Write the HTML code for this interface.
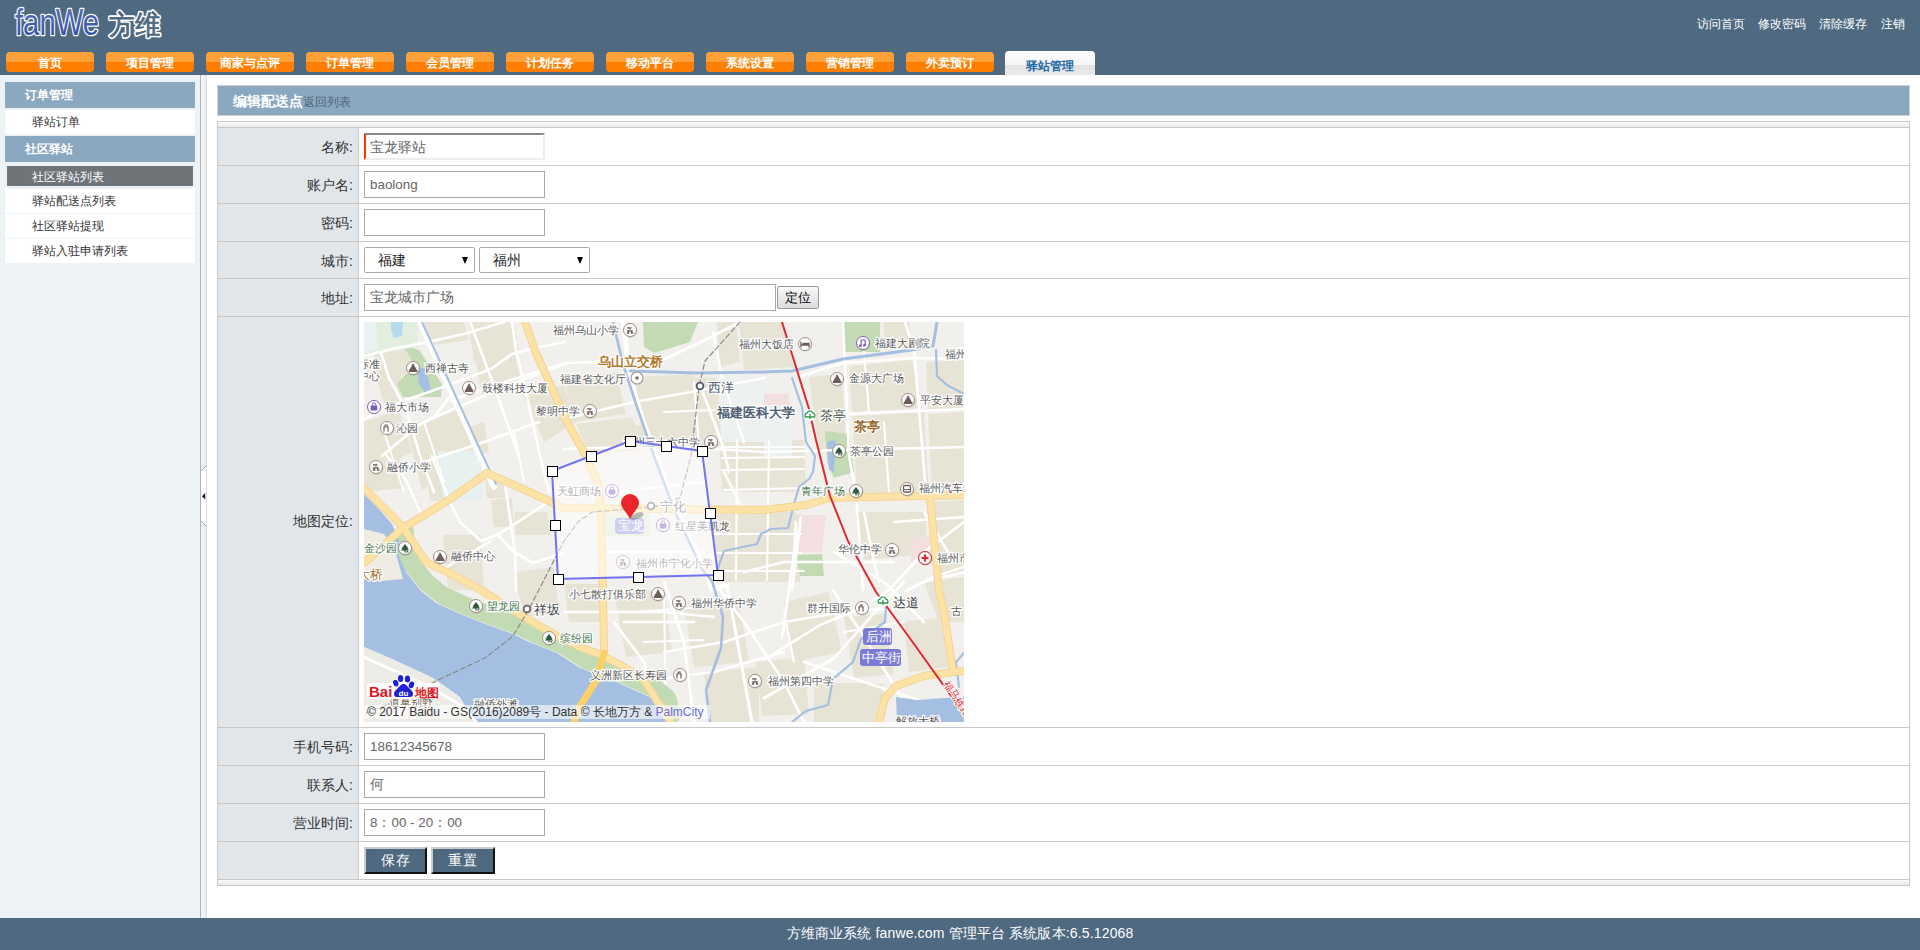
<!DOCTYPE html><html><head><meta charset="utf-8"><style>*{box-sizing:border-box;margin:0;padding:0}
html,body{width:1920px;height:950px;overflow:hidden;background:#fff;font-family:"Liberation Sans",sans-serif;font-size:12px;color:#333}
#hdr{position:absolute;left:0;top:0;width:1920px;height:75px;background:#4e6980}
#logo{position:absolute;left:14px;top:4px;height:36px;color:#4d64a8;font-size:30px;white-space:nowrap}
.lg1{font-family:"Liberation Sans",sans-serif;-webkit-text-stroke:1.5px #fff;font-size:30px;letter-spacing:-1px}
.lg2{margin-left:10px;-webkit-text-stroke:1px #fff;font-size:28px}
.tab{position:absolute;top:52px;width:88px;height:20px;border-radius:4px;background:linear-gradient(#ffa13a 0,#ffa13a 50%,#ff7e00 50%,#ff7e00 100%);color:#fff;font-weight:bold;font-size:12px;text-align:center;line-height:22px}
.tab.on{top:51px;height:24px;width:90px;border-radius:4px 4px 0 0;background:linear-gradient(#ffffff,#f4f4f4 58%,#e2e2e2 58%,#ebebeb);color:#1f6aa6;font-weight:600;line-height:31px;font-size:12px}
.toplink{position:absolute;top:16px;color:#fff;font-size:12px}
#side{position:absolute;left:0;top:75px;width:200px;height:843px;background:#edf2f6}
.grp{position:absolute;left:5px;width:190px;height:26px;background:#8ba8c1;color:#fff;font-weight:bold;padding-left:20px;line-height:26px}
.item{position:absolute;left:5px;width:190px;height:24px;background:#fff;padding-left:27px;line-height:25px;color:#333}
.item.on{background:#6e7478;color:#fff;left:7px;width:186px;height:20px;margin-top:2px;line-height:23px;padding-left:25px}
#split{position:absolute;left:200px;top:75px;width:7px;height:843px;background:linear-gradient(90deg,#b0b2b4 0,#b0b2b4 1px,#f8f9fa 1px,#e8ebef 6px,#dadde2 6px)}
#main{position:absolute;left:207px;top:75px;width:1713px;height:843px;background:#fff}
#title{position:absolute;left:217px;top:85px;width:1693px;height:31px;background:#8ba8c1;border:1px solid #cfcfcf;color:#fff;font-weight:bold;font-size:14px;line-height:30px;padding-left:15px}
#title span{font-weight:normal;color:#52677a;font-size:12px}
#ftr{position:absolute;left:0;top:918px;width:1920px;height:32px;background:#4e6980;color:#fff;font-size:14px;text-align:center;line-height:30px;letter-spacing:0.15px}
#tbl{position:absolute;left:217px;top:121px;width:1693px;height:765px;border:1px solid #c8c8c8;background:linear-gradient(#fbfbfb,#e9e9e9 5px,#c8c8c8 5px,#c8c8c8 6px,#fff 6px,#fff 757px,#fbfbfb 758px,#e9e9e9 763px)}
.row{position:absolute;left:218px;width:1691px;border-bottom:1px solid #c8c8c8;background:#fff}
.lab{position:absolute;left:0;top:0;width:141px;height:100%;background:#e1e6eb;border-right:1px solid #c8c8c8;text-align:right;font-size:14px;color:#333;padding-right:5px}
.inp{position:absolute;left:364px;width:181px;height:27px;border:1px solid #a9a9a9;background:#fff;font-size:14px;color:#666;padding-left:5px;line-height:25px;white-space:nowrap}
.inp.focus{padding-left:4px;border-left:2px solid #f30;border-top:2px solid #888;border-bottom:2px solid #eee;border-right:2px solid #eee}
.sel{position:absolute;width:111px;height:26px;border:1px solid #a9a9a9;border-radius:2px;background:#fff;font-size:14px;color:#222;padding-left:13px;line-height:25px}
.sel i{position:absolute;right:6px;top:9px;border-left:3.5px solid transparent;border-right:3.5px solid transparent;border-top:7px solid #000}
.btn2{position:absolute;width:42px;height:23px;border:1px solid #9a9a9a;border-radius:2px;background:linear-gradient(#f8f8f8,#dcdcdc);font-size:13px;color:#000;text-align:center;line-height:22px}
.btn{position:absolute;width:63px;height:27px;background:#4e6980;border:2px solid;border-color:#ccc #111 #111 #ccc;color:#fff;font-size:14px;text-align:center;line-height:23px;letter-spacing:1px}
#map{position:absolute;left:364px;top:322px;width:600px;height:400px;background:#eeebe1;overflow:hidden}
#tog{position:absolute;left:1px;top:390px;width:5px;height:60px}

.lt{font-weight:normal;font-size:13.4px}
</style></head><body><div id="hdr"><svg style="position:absolute;left:0;top:0" width="180" height="50" viewBox="0 0 180 50"><defs><linearGradient id="lgb" x1="0" y1="0" x2="0" y2="1"><stop offset="0" stop-color="#5d74bd"/><stop offset="1" stop-color="#2f4da6"/></linearGradient></defs><text x="15" y="35" font-size="36" textLength="84" lengthAdjust="spacingAndGlyphs" fill="url(#lgb)" stroke="#fff" stroke-width="2.6" paint-order="stroke" stroke-linejoin="round" font-family="Liberation Sans">fanWe</text><text x="109" y="33.5" font-size="27" textLength="51" lengthAdjust="spacingAndGlyphs" fill="#fff" stroke="#fff" stroke-width="4" stroke-linejoin="round">方维</text><text x="109" y="33.5" font-size="27" textLength="51" lengthAdjust="spacingAndGlyphs" fill="#4e6980" stroke="#4e6980" stroke-width="0.8" stroke-linejoin="round">方维</text></svg><div class="toplink" style="left:1697px">访问首页</div><div class="toplink" style="left:1758px">修改密码</div><div class="toplink" style="left:1819px">清除缓存</div><div class="toplink" style="left:1881px">注销</div><div class="tab" style="left:6px">首页</div><div class="tab" style="left:106px">项目管理</div><div class="tab" style="left:206px">商家与点评</div><div class="tab" style="left:306px">订单管理</div><div class="tab" style="left:406px">会员管理</div><div class="tab" style="left:506px">计划任务</div><div class="tab" style="left:606px">移动平台</div><div class="tab" style="left:706px">系统设置</div><div class="tab" style="left:806px">营销管理</div><div class="tab" style="left:906px">外卖预订</div><div class="tab on" style="left:1005px">驿站管理</div></div><div id="side"><div class="grp" style="top:7px">订单管理</div><div class="item" style="top:35px">驿站订单</div><div class="grp" style="top:61px">社区驿站</div><div class="item on" style="top:89px">社区驿站列表</div><div class="item" style="top:114px">驿站配送点列表</div><div class="item" style="top:139px">社区驿站提现</div><div class="item" style="top:164px">驿站入驻申请列表</div></div><div id="split"><svg style="position:absolute;left:0;top:0" width="7" height="843"><polygon points="1,396 6,391 6,451 1,446" fill="#fff"/><path d="M1,396 L6,391 M1,446 L6,451" stroke="#7d97ad" stroke-width="0.8"/><polygon points="2,421.3 5.2,418 5.2,424.5" fill="#111"/></svg></div><div id="main"></div><div id="title">编辑配送点<span>返回列表</span></div><div id="tbl"></div><div class="row" style="top:128px;height:38px"><div class="lab" style="line-height:39px">名称:</div></div><div class="row" style="top:166px;height:38px"><div class="lab" style="line-height:39px">账户名:</div></div><div class="row" style="top:204px;height:38px"><div class="lab" style="line-height:39px">密码:</div></div><div class="row" style="top:242px;height:37px"><div class="lab" style="line-height:38px">城市:</div></div><div class="row" style="top:279px;height:38px"><div class="lab" style="line-height:39px">地址:</div></div><div class="row" style="top:317px;height:411px"><div class="lab" style="line-height:409px">地图定位:</div></div><div class="row" style="top:728px;height:38px"><div class="lab" style="line-height:39px">手机号码:</div></div><div class="row" style="top:766px;height:38px"><div class="lab" style="line-height:39px">联系人:</div></div><div class="row" style="top:804px;height:38px"><div class="lab" style="line-height:39px">营业时间:</div></div><div class="row" style="top:842px;height:38px"><div class="lab" style="line-height:39px"></div></div><div class="inp focus" style="top:133px">宝龙驿站</div><div class="inp" style="top:171px"><b class="lt">baolong</b></div><div class="inp" style="top:209px"></div><div class="sel" style="left:364px;top:247px">福建<i></i></div><div class="sel" style="left:479px;top:247px">福州<i></i></div><div class="inp" style="top:284px;width:412px;height:27px">宝龙城市广场</div><div class="btn2" style="left:777px;top:286px">定位</div><div id="map"><svg width="600" height="400" viewBox="0 0 600 400" style="display:block;font-family:'Liberation Sans',sans-serif">
<rect width="600" height="400" fill="#f1f0ec"/>
<polygon points="10,30 34,26 40,80 22,90 14,60" fill="#e8e4d5" />
<polygon points="60,0 100,0 105,18 64,24" fill="#e8e4d5" />
<polygon points="104,0 150,0 155,30 110,40" fill="#e8e4d5" />
<polygon points="0,100 35,88 48,130 12,150 0,150" fill="#e8e4d5" />
<polygon points="42,104 95,85 110,140 58,168" fill="#e8e4d5" />
<polygon points="112,40 150,30 158,60 118,75" fill="#e8e4d5" />
<polygon points="160,75 200,62 212,100 180,120" fill="#e8e4d5" />
<polygon points="200,58 252,50 262,92 210,100" fill="#e8e4d5" />
<polygon points="212,102 268,95 280,128 225,132" fill="#e8e4d5" />
<polygon points="270,55 330,52 340,128 285,125" fill="#e8e4d5" />
<polygon points="0,134 35,134 40,166 0,170" fill="#e8e4d5" />
<polygon points="62,148 85,148 85,179 66,179" fill="#e8e4d5" />
<polygon points="79,213 117,213 120,268 84,268" fill="#e8e4d5" />
<polygon points="121,157 141,157 141,176 123,176" fill="#e8e4d5" />
<polygon points="127,178 148,176 150,205 130,205" fill="#e8e4d5" />
<polygon points="150,190 183,190 186,213 152,213" fill="#e8e4d5" />
<polygon points="150,250 190,245 195,290 160,295" fill="#e8e4d5" />
<polygon points="75,115 120,100 125,130 85,140" fill="#e8e4d5" />
<polygon points="375,0 418,0 430,45 380,48" fill="#e8e4d5" />
<polygon points="353,0 372,0 376,40 356,45" fill="#e8e4d5" />
<polygon points="296,55 353,56 358,125 300,128" fill="#e8e4d5" />
<polygon points="445,55 478,52 482,125 455,128" fill="#e8e4d5" />
<polygon points="485,44 548,38 556,86 488,90" fill="#e8e4d5" />
<polygon points="488,94 560,90 565,172 493,172" fill="#e8e4d5" />
<polygon points="562,40 600,38 600,86 564,88" fill="#e8e4d5" />
<polygon points="564,92 600,90 600,170 568,172" fill="#e8e4d5" />
<polygon points="520,0 545,0 548,25 520,28" fill="#e8e4d5" />
<polygon points="493,190 562,190 562,232 500,238" fill="#e8e4d5" />
<polygon points="405,190 432,190 430,215 405,215" fill="#e8e4d5" />
<polygon points="345,195 400,195 400,260 358,255" fill="#e8e4d5" />
<polygon points="566,180 600,178 600,250 572,255" fill="#e8e4d5" />
<polygon points="420,280 465,270 478,330 430,340" fill="#e8e4d5" />
<polygon points="480,295 520,292 530,352 490,356" fill="#e8e4d5" />
<polygon points="540,300 580,295 585,345 545,350" fill="#e8e4d5" />
<polygon points="250,270 300,268 308,330 262,335" fill="#e8e4d5" />
<polygon points="320,285 375,278 385,340 330,345" fill="#e8e4d5" />
<polygon points="392,340 440,335 445,392 398,394" fill="#e8e4d5" />
<polygon points="450,360 520,362 515,400 450,400" fill="#e8e4d5" />
<polygon points="340,350 395,345 395,400 345,400" fill="#e8e4d5" />
<polygon points="200,262 240,262 242,300 205,300" fill="#e8e4d5" />
<polygon points="0,255 30,262 35,300 0,300" fill="#e8e4d5" />
<polygon points="560,260 600,255 600,300 575,300" fill="#e8e4d5" />
<polygon points="355,118 440,118 442,170 358,170" fill="#e8e4d5" />
<polygon points="352,192 437,192 436,260 355,260" fill="#e8e4d5" />
<polygon points="240,110 290,100 300,120 250,125" fill="#e8e4d5" />
<polygon points="17,27 42,23 55,30 55,52 20,52" fill="#e8e4d5" />
<polygon points="39,23 55,28 78,62 77,75 39,75 33,62 42,52 55,52" fill="#c3dbb4" />
<polygon points="0,0 53,0 53,25 20,31 0,33" fill="#e2efdf" />
<polygon points="279,0 334,0 326,20 290,31 280,25" fill="#c3dbb4" />
<polygon points="480,0 516,0 516,30 480,30" fill="#c3dbb4" />
<polygon points="461,109 485,112 490,150 470,156 463,140" fill="#c3dbb4" />
<polygon points="432,233 458,232 460,254 436,254" fill="#c3dbb4" />
<polygon points="241,192 286,192 286,214 241,214" fill="#e0ecd8" />
<polygon points="355,56 400,56 400,120 360,120" fill="#edf2f0" />
<polygon points="400,83 428,83 428,134 400,134" fill="#edf2f0" />
<polygon points="0,0 12,0 14,28 0,30" fill="#e9f1f2" />
<polygon points="74,130 118,128 118,179 80,179" fill="#e6f1f0" />
<polygon points="435,193 462,193 458,230 432,230" fill="#f3dfe0" />
<polygon points="547,215 573,215 573,240 547,240" fill="#f3dfe0" />
<polygon points="400,72 425,72 425,83 400,83" fill="#f3dfe0" />
<polygon points="27,0 39,0 38,14 30,16 27,8" fill="#b4dcef" />
<polygon points="53,45 62,47 67,68 62,72 55,62" fill="#a4bfe1" />
<polygon points="463,120 472,118 470,150 465,148" fill="#a4bfe1" />
<polyline points="355,125 440,125" fill="none" stroke="#ffffff" stroke-width="2" stroke-linejoin="round" stroke-linecap="round" />
<polyline points="358,136 440,135" fill="none" stroke="#ffffff" stroke-width="2" stroke-linejoin="round" stroke-linecap="round" />
<polyline points="358,148 440,147" fill="none" stroke="#ffffff" stroke-width="2" stroke-linejoin="round" stroke-linecap="round" />
<polyline points="360,168 445,166" fill="none" stroke="#ffffff" stroke-width="2" stroke-linejoin="round" stroke-linecap="round" />
<polyline points="350,212 437,212" fill="none" stroke="#ffffff" stroke-width="2" stroke-linejoin="round" stroke-linecap="round" />
<polyline points="352,231 437,231" fill="none" stroke="#ffffff" stroke-width="2" stroke-linejoin="round" stroke-linecap="round" />
<polyline points="355,249 440,249" fill="none" stroke="#ffffff" stroke-width="2" stroke-linejoin="round" stroke-linecap="round" />
<polyline points="373,118 372,258" fill="none" stroke="#ffffff" stroke-width="2" stroke-linejoin="round" stroke-linecap="round" />
<polyline points="405,118 403,258" fill="none" stroke="#ffffff" stroke-width="2" stroke-linejoin="round" stroke-linecap="round" />
<polyline points="437,195 425,260" fill="none" stroke="#ffffff" stroke-width="2" stroke-linejoin="round" stroke-linecap="round" />
<polyline points="300,270 302,400" fill="none" stroke="#ffffff" stroke-width="2" stroke-linejoin="round" stroke-linecap="round" />
<polyline points="270,290 340,285" fill="none" stroke="#ffffff" stroke-width="2" stroke-linejoin="round" stroke-linecap="round" />
<polyline points="280,320 340,318" fill="none" stroke="#ffffff" stroke-width="2" stroke-linejoin="round" stroke-linecap="round" />
<polyline points="20,110 40,170" fill="none" stroke="#ffffff" stroke-width="2" stroke-linejoin="round" stroke-linecap="round" />
<polyline points="60,100 80,160" fill="none" stroke="#ffffff" stroke-width="2" stroke-linejoin="round" stroke-linecap="round" />
<polyline points="150,110 160,160" fill="none" stroke="#ffffff" stroke-width="2" stroke-linejoin="round" stroke-linecap="round" />
<polyline points="420,290 430,340" fill="none" stroke="#ffffff" stroke-width="2" stroke-linejoin="round" stroke-linecap="round" />
<polyline points="480,310 540,300" fill="none" stroke="#ffffff" stroke-width="2" stroke-linejoin="round" stroke-linecap="round" />
<polyline points="500,30 505,90" fill="none" stroke="#ffffff" stroke-width="2" stroke-linejoin="round" stroke-linecap="round" />
<polyline points="520,100 525,170" fill="none" stroke="#ffffff" stroke-width="2" stroke-linejoin="round" stroke-linecap="round" />
<polyline points="300,90 350,88" fill="none" stroke="#ffffff" stroke-width="2" stroke-linejoin="round" stroke-linecap="round" />
<polyline points="330,60 335,125" fill="none" stroke="#ffffff" stroke-width="2" stroke-linejoin="round" stroke-linecap="round" />
<polyline points="0,34 28,27 59,21 100,12 140,0" fill="none" stroke="#ffffff" stroke-width="2.6" stroke-linejoin="round" stroke-linecap="round" />
<polyline points="0,97 39,79 79,65 127,47 148,32 175,25 200,20" fill="none" stroke="#ffffff" stroke-width="2.6" stroke-linejoin="round" stroke-linecap="round" />
<polyline points="18,134 56,102 99,83 155,59 200,42" fill="none" stroke="#ffffff" stroke-width="2.6" stroke-linejoin="round" stroke-linecap="round" />
<polyline points="17,31 25,56 42,87 56,134 70,170" fill="none" stroke="#ffffff" stroke-width="2.6" stroke-linejoin="round" stroke-linecap="round" />
<polyline points="106,0 127,56 155,134" fill="none" stroke="#ffffff" stroke-width="2.6" stroke-linejoin="round" stroke-linecap="round" />
<polyline points="148,0 152,28 162,70 176,134 185,170" fill="none" stroke="#ffffff" stroke-width="2.6" stroke-linejoin="round" stroke-linecap="round" />
<polyline points="200,97 270,80 327,70 400,56" fill="none" stroke="#ffffff" stroke-width="2.6" stroke-linejoin="round" stroke-linecap="round" />
<polyline points="87,78 156,55 203,41 299,38 341,18 376,0" fill="none" stroke="#ffffff" stroke-width="2.6" stroke-linejoin="round" stroke-linecap="round" />
<polyline points="349,10 358,56 380,120" fill="none" stroke="#ffffff" stroke-width="2.6" stroke-linejoin="round" stroke-linecap="round" />
<polyline points="338,68 359,124 365,150" fill="none" stroke="#ffffff" stroke-width="2.6" stroke-linejoin="round" stroke-linecap="round" />
<polyline points="437,54 479,41 548,36 600,37" fill="none" stroke="#ffffff" stroke-width="2.6" stroke-linejoin="round" stroke-linecap="round" />
<polyline points="479,0 485,134 492,172" fill="none" stroke="#ffffff" stroke-width="2.6" stroke-linejoin="round" stroke-linecap="round" />
<polyline points="541,0 550,28 559,134 562,172" fill="none" stroke="#ffffff" stroke-width="2.6" stroke-linejoin="round" stroke-linecap="round" />
<polyline points="485,92 600,87" fill="none" stroke="#ffffff" stroke-width="2.6" stroke-linejoin="round" stroke-linecap="round" />
<polyline points="200,127 300,124 400,130 600,125" fill="none" stroke="#ffffff" stroke-width="2.6" stroke-linejoin="round" stroke-linecap="round" />
<polyline points="492,172 499,268" fill="none" stroke="#ffffff" stroke-width="2.6" stroke-linejoin="round" stroke-linecap="round" />
<polyline points="428,268 437,195" fill="none" stroke="#ffffff" stroke-width="2.6" stroke-linejoin="round" stroke-linecap="round" />
<polyline points="469,268 497,310 533,368 553,400" fill="none" stroke="#ffffff" stroke-width="2.6" stroke-linejoin="round" stroke-linecap="round" />
<polyline points="400,338 456,303 497,286 525,268 560,230 600,200" fill="none" stroke="#ffffff" stroke-width="2.6" stroke-linejoin="round" stroke-linecap="round" />
<polyline points="400,376 469,337 515,286 540,260" fill="none" stroke="#ffffff" stroke-width="2.6" stroke-linejoin="round" stroke-linecap="round" />
<polyline points="350,260 380,300 420,360 440,400" fill="none" stroke="#ffffff" stroke-width="2.6" stroke-linejoin="round" stroke-linecap="round" />
<polyline points="300,260 320,320 330,400" fill="none" stroke="#ffffff" stroke-width="2.6" stroke-linejoin="round" stroke-linecap="round" />
<polyline points="270,360 350,350 420,330" fill="none" stroke="#ffffff" stroke-width="2.6" stroke-linejoin="round" stroke-linecap="round" />
<polyline points="200,290 300,290 350,295" fill="none" stroke="#ffffff" stroke-width="2.6" stroke-linejoin="round" stroke-linecap="round" />
<polyline points="60,140 120,120 175,100" fill="none" stroke="#ffffff" stroke-width="2.6" stroke-linejoin="round" stroke-linecap="round" />
<polyline points="40,110 70,95 90,70" fill="none" stroke="#ffffff" stroke-width="2.6" stroke-linejoin="round" stroke-linecap="round" />
<polyline points="560,260 600,250" fill="none" stroke="#ffffff" stroke-width="2.6" stroke-linejoin="round" stroke-linecap="round" />
<polyline points="530,200 600,195" fill="none" stroke="#ffffff" stroke-width="2.6" stroke-linejoin="round" stroke-linecap="round" />
<polyline points="420,240 530,240" fill="none" stroke="#ffffff" stroke-width="2.6" stroke-linejoin="round" stroke-linecap="round" />
<polyline points="250,300 280,340 290,380" fill="none" stroke="#ffffff" stroke-width="2.6" stroke-linejoin="round" stroke-linecap="round" />
<polyline points="360,150 380,190" fill="none" stroke="#ffffff" stroke-width="2.6" stroke-linejoin="round" stroke-linecap="round" />
<polyline points="250,170 340,160" fill="none" stroke="#ffffff" stroke-width="2.6" stroke-linejoin="round" stroke-linecap="round" />
<polyline points="240,230 340,230" fill="none" stroke="#ffffff" stroke-width="2.6" stroke-linejoin="round" stroke-linecap="round" />
<polyline points="23,134 42,158 56,190" fill="none" stroke="#ffffff" stroke-width="2.6" stroke-linejoin="round" stroke-linecap="round" />
<polyline points="68,134 85,178 96,200 117,219 135,212 183,181" fill="none" stroke="#ffffff" stroke-width="2.6" stroke-linejoin="round" stroke-linecap="round" />
<polyline points="141,162 147,203 151,230 152,268" fill="none" stroke="#ffffff" stroke-width="2.6" stroke-linejoin="round" stroke-linecap="round" />
<polyline points="133,212 150,230 169,241 200,231" fill="none" stroke="#ffffff" stroke-width="2.6" stroke-linejoin="round" stroke-linecap="round" />
<polyline points="79,247 127,219" fill="none" stroke="#ffffff" stroke-width="2.6" stroke-linejoin="round" stroke-linecap="round" />
<polyline points="418,316 430,232 432,200" fill="none" stroke="#ffffff" stroke-width="2.6" stroke-linejoin="round" stroke-linecap="round" />
<polyline points="542,269 569,255 600,245" fill="none" stroke="#ffffff" stroke-width="2.6" stroke-linejoin="round" stroke-linecap="round" />
<polyline points="420,300 480,290 540,285" fill="none" stroke="#ffffff" stroke-width="2.6" stroke-linejoin="round" stroke-linecap="round" />
<polyline points="440,340 500,360 560,380" fill="none" stroke="#ffffff" stroke-width="2.6" stroke-linejoin="round" stroke-linecap="round" />
<polyline points="470,230 520,260 560,300" fill="none" stroke="#ffffff" stroke-width="2.6" stroke-linejoin="round" stroke-linecap="round" />
<polyline points="300,330 360,320 420,300" fill="none" stroke="#ffffff" stroke-width="2.6" stroke-linejoin="round" stroke-linecap="round" />
<polyline points="260,300 330,300" fill="none" stroke="#ffffff" stroke-width="2.6" stroke-linejoin="round" stroke-linecap="round" />
<polyline points="380,250 420,240" fill="none" stroke="#ffffff" stroke-width="2.6" stroke-linejoin="round" stroke-linecap="round" />
<polyline points="500,190 510,240 515,260" fill="none" stroke="#ffffff" stroke-width="2.6" stroke-linejoin="round" stroke-linecap="round" />
<polyline points="560,190 590,240" fill="none" stroke="#ffffff" stroke-width="2.6" stroke-linejoin="round" stroke-linecap="round" />
<polyline points="56,0 116,134 130,165" fill="none" stroke="#ffffff" stroke-width="6" stroke-linejoin="round" stroke-linecap="round" />
<polyline points="58,0 119,134 132,162" fill="none" stroke="#a4bfe1" stroke-width="2" stroke-linejoin="round" stroke-linecap="round" />
<polyline points="259,0 266,56 279,99 292,134 313,190 341,247 348,268 363,263" fill="none" stroke="#ffffff" stroke-width="5" stroke-linejoin="round" stroke-linecap="round" />
<polyline points="363,263 388,400" fill="none" stroke="#ffffff" stroke-width="3" stroke-linejoin="round" stroke-linecap="round" />
<polyline points="249,0 259,42 273,85 290,134 311,190 338,247 348,259 359,295 357,326 342,368 346,400" fill="none" stroke="#a4bfe1" stroke-width="2.6" stroke-linejoin="round" stroke-linecap="round" />
<polyline points="266,49 334,51 400,50 428,49 479,37 548,28 569,24 573,0" fill="none" stroke="#a4bfe1" stroke-width="3" stroke-linejoin="round" stroke-linecap="round" />
<polyline points="572,28 573,54 583,63 600,72" fill="none" stroke="#a4bfe1" stroke-width="2.2" stroke-linejoin="round" stroke-linecap="round" />
<polyline points="428,56 438,85 442,120 451,134 449,150 445,157 435,165 430,182 424,206 407,207 397,212 393,222 360,229 355,243 352,255" fill="none" stroke="#a4bfe1" stroke-width="2.2" stroke-linejoin="round" stroke-linecap="round" />
<polyline points="522,283 521,300 497,317 489,340 469,357 464,383 442,389 428,400" fill="none" stroke="#a4bfe1" stroke-width="2.2" stroke-linejoin="round" stroke-linecap="round" />
<polyline points="600,331 592,340 595,365" fill="none" stroke="#a4bfe1" stroke-width="2" stroke-linejoin="round" stroke-linecap="round" />
<polyline points="41,210 40,224 48,242 62,260 78,273 102,284 130,295 155,304 171,312 199,323 222,338 254,350 276,360 292,367 303,376 308,392" fill="none" stroke="#c3dbb4" stroke-width="18" stroke-linejoin="round" stroke-linecap="round" stroke-linecap="butt"/>
<polygon points="0,172 14,186 28,202 35,218 34,232 42,250 56,268 72,281 96,292 124,303 149,312 165,320 193,331 216,346 248,358 270,368 286,375 297,384 302,400 110,400 96,375 69,356 28,337 0,325" fill="#a4bfe1" />
<polygon points="0,207 20,212 30,225 39,257 17,259 0,257" fill="#efece4" />
<polygon points="0,325 28,337 69,356 96,375 110,400 0,400" fill="#ecebe6" />
<polyline points="0,335 60,362 100,385 112,400" fill="none" stroke="#ffffff" stroke-width="3" stroke-linejoin="round" stroke-linecap="round" />
<polygon points="532,375 553,378 581,376 600,375 600,400 533,400" fill="#a4bfe1" />
<polyline points="161,0 172,31 186,62 203,100 222,134 234,162 237,190 239,268 240,331" fill="none" stroke="#f6d394" stroke-width="8" stroke-linejoin="round" stroke-linecap="round" />
<polyline points="0,166 39,205 62,240 85,251 117,268 165,298 193,314 216,325 237,333 259,344 280,358 293,379 307,400" fill="none" stroke="#f6d394" stroke-width="8" stroke-linejoin="round" stroke-linecap="round" />
<polyline points="0,241 39,206 85,178 123,151" fill="none" stroke="#f6d394" stroke-width="8" stroke-linejoin="round" stroke-linecap="round" />
<polyline points="123,151 183,178 200,186 290,187 400,188 442,183 466,176 600,173" fill="none" stroke="#f6d394" stroke-width="8" stroke-linejoin="round" stroke-linecap="round" />
<polyline points="566,176 575,268 581,296 589,350" fill="none" stroke="#f6d394" stroke-width="8" stroke-linejoin="round" stroke-linecap="round" />
<polyline points="600,349 589,350 560,354 532,364 521,376 515,400" fill="none" stroke="#f6d394" stroke-width="8" stroke-linejoin="round" stroke-linecap="round" />
<polyline points="161,0 172,31 186,62 203,100 222,134 234,162 237,190 239,268 240,331" fill="none" stroke="#fde2a6" stroke-width="6" stroke-linejoin="round" stroke-linecap="round" />
<polyline points="0,166 39,205 62,240 85,251 117,268 165,298 193,314 216,325 237,333 259,344 280,358 293,379 307,400" fill="none" stroke="#fde2a6" stroke-width="6" stroke-linejoin="round" stroke-linecap="round" />
<polyline points="0,241 39,206 85,178 123,151" fill="none" stroke="#fde2a6" stroke-width="6" stroke-linejoin="round" stroke-linecap="round" />
<polyline points="123,151 183,178 200,186 290,187 400,188 442,183 466,176 600,173" fill="none" stroke="#fde2a6" stroke-width="6" stroke-linejoin="round" stroke-linecap="round" />
<polyline points="566,176 575,268 581,296 589,350" fill="none" stroke="#fde2a6" stroke-width="6" stroke-linejoin="round" stroke-linecap="round" />
<polyline points="600,349 589,350 560,354 532,364 521,376 515,400" fill="none" stroke="#fde2a6" stroke-width="6" stroke-linejoin="round" stroke-linecap="round" />
<polyline points="240,331 232,359 216,384 210,400" fill="none" stroke="#fbd06a" stroke-width="7" stroke-linejoin="round" stroke-linecap="round" />
<polyline points="376,0 341,39 335,65 327,134 316,176 290,185 228,190 214,200 200,219 165,287 149,314 121,336 72,359 30,380 0,392" fill="none" stroke="#8a8a8a" stroke-width="1.2" stroke-linejoin="round" stroke-linecap="round" stroke-dasharray="5,3"/>
<polyline points="418,0 445,87 452,118 466,174 484,219 512,270 545,315 600,392" fill="none" stroke="#e0282e" stroke-width="2" stroke-linejoin="round" stroke-linecap="round" />
<text x="-6" y="46.0" font-size="11" font-weight="normal" fill="#595959" text-anchor="start" stroke="#fff" stroke-width="2.5" paint-order="stroke" stroke-linejoin="round" >标准</text>
<text x="-6" y="58.0" font-size="11" font-weight="normal" fill="#595959" text-anchor="start" stroke="#fff" stroke-width="2.5" paint-order="stroke" stroke-linejoin="round" >中心</text>
<g opacity="1.0"><circle cx="266.6" cy="8.9" r="6.8" fill="#000" opacity="0.12"/><circle cx="266" cy="8" r="6.5" fill="#fff" stroke="#9a8d88" stroke-width="1"/>
<path d="M263,5.8 h4.5 M266,5.8 v1.6 M262.8,8.8 h6 M264.5,8.8 v2.2 M262.8,11 h2.5 M267.5,8.8 v2.2 h1.8" fill="none" stroke="#6e5c57" stroke-width="1.3"/>
</g>
<text x="189" y="12.0" font-size="11" font-weight="normal" fill="#595959" text-anchor="start" stroke="#fff" stroke-width="2.5" paint-order="stroke" stroke-linejoin="round" >福州乌山小学</text>
<text x="234" y="43.7" font-size="13" font-weight="bold" fill="#b17a2c" text-anchor="start" stroke="#fff" stroke-width="2.5" paint-order="stroke" stroke-linejoin="round" >乌山立交桥</text>
<circle cx="273" cy="56" r="6" fill="#fff" stroke="#a09690" stroke-width="1.1"/><circle cx="273" cy="56" r="1.8" fill="#7d6a64"/>
<text x="196" y="61.0" font-size="11" font-weight="normal" fill="#595959" text-anchor="start" stroke="#fff" stroke-width="2.5" paint-order="stroke" stroke-linejoin="round" >福建省文化厅</text>
<g opacity="1.0"><circle cx="49.6" cy="46.9" r="6.8" fill="#000" opacity="0.12"/><circle cx="49" cy="46" r="6.5" fill="#fff" stroke="#9a8d88" stroke-width="1"/>
<path d="M48.1,41.8 h1.8 v1.6 h1 v2 h1.2 v2 h1.2 v2.6 h-8.4 v-2.6 h1.2 v-2 h1.2 v-2 h1 z" fill="#6e5c57"/>
</g>
<text x="61" y="50.0" font-size="11" font-weight="normal" fill="#595959" text-anchor="start" stroke="#fff" stroke-width="2.5" paint-order="stroke" stroke-linejoin="round" >西禅古寺</text>
<g opacity="1.0"><circle cx="105.6" cy="66.9" r="6.8" fill="#000" opacity="0.12"/><circle cx="105" cy="66" r="6.5" fill="#fff" stroke="#9a8d88" stroke-width="1"/>
<path d="M104.1,61.8 h1.8 v1.6 h1 v2 h1.2 v2 h1.2 v2.6 h-8.4 v-2.6 h1.2 v-2 h1.2 v-2 h1 z" fill="#6e5c57"/>
</g>
<text x="118" y="70.0" font-size="11" font-weight="normal" fill="#595959" text-anchor="start" stroke="#fff" stroke-width="2.5" paint-order="stroke" stroke-linejoin="round" >鼓楼科技大厦</text>
<g opacity="1.0"><circle cx="10.6" cy="85.9" r="6.8" fill="#000" opacity="0.12"/><circle cx="10" cy="85" r="6.5" fill="#fff" stroke="#8060c0" stroke-width="1"/>
<rect x="6.7" y="83.5" width="6.6" height="5" rx="0.8" fill="#7b5bb8"/><path d="M8.4,83.5 v-1 a1.6,1.6 0 0 1 3.2,0 v1" fill="none" stroke="#7b5bb8" stroke-width="1"/>
</g>
<text x="21" y="89.0" font-size="11" font-weight="normal" fill="#595959" text-anchor="start" stroke="#fff" stroke-width="2.5" paint-order="stroke" stroke-linejoin="round" >福大市场</text>
<g opacity="1.0"><circle cx="23.6" cy="106.9" r="6.8" fill="#000" opacity="0.12"/><circle cx="23" cy="106" r="6.5" fill="#fff" stroke="#9a8d88" stroke-width="1"/>
<path d="M20,109.5 v-4.5 l1.2,0 v-2 h1.8 v2 h1 v4.5" fill="none" stroke="#6e5c57" stroke-width="1.2"/>
</g>
<text x="32" y="110.0" font-size="11" font-weight="normal" fill="#595959" text-anchor="start" stroke="#fff" stroke-width="2.5" paint-order="stroke" stroke-linejoin="round" >沁园</text>
<g opacity="1.0"><circle cx="226.6" cy="89.9" r="6.8" fill="#000" opacity="0.12"/><circle cx="226" cy="89" r="6.5" fill="#fff" stroke="#9a8d88" stroke-width="1"/>
<path d="M223,86.8 h4.5 M226,86.8 v1.6 M222.8,89.8 h6 M224.5,89.8 v2.2 M222.8,92 h2.5 M227.5,89.8 v2.2 h1.8" fill="none" stroke="#6e5c57" stroke-width="1.3"/>
</g>
<text x="172" y="93.0" font-size="11" font-weight="normal" fill="#595959" text-anchor="start" stroke="#fff" stroke-width="2.5" paint-order="stroke" stroke-linejoin="round" >黎明中学</text>
<g opacity="1.0"><circle cx="12.6" cy="145.9" r="6.8" fill="#000" opacity="0.12"/><circle cx="12" cy="145" r="6.5" fill="#fff" stroke="#9a8d88" stroke-width="1"/>
<path d="M9,142.8 h4.5 M12,142.8 v1.6 M8.8,145.8 h6 M10.5,145.8 v2.2 M8.8,148 h2.5 M13.5,145.8 v2.2 h1.8" fill="none" stroke="#6e5c57" stroke-width="1.3"/>
</g>
<text x="23" y="149.0" font-size="11" font-weight="normal" fill="#595959" text-anchor="start" stroke="#fff" stroke-width="2.5" paint-order="stroke" stroke-linejoin="round" >融侨小学</text>
<circle cx="336" cy="64" r="3.4" fill="#fff" stroke="#4e5a68" stroke-width="1.8"/>
<text x="344" y="69.7" font-size="13" font-weight="normal" fill="#4e5a68" text-anchor="start" stroke="#fff" stroke-width="2.5" paint-order="stroke" stroke-linejoin="round" >西洋</text>
<text x="353" y="94.7" font-size="13" font-weight="bold" fill="#4d6073" text-anchor="start" stroke="#fff" stroke-width="2.5" paint-order="stroke" stroke-linejoin="round" >福建医科大学</text>
<g opacity="1.0"><circle cx="441.6" cy="22.9" r="6.8" fill="#000" opacity="0.12"/><circle cx="441" cy="22" r="6.5" fill="#fff" stroke="#9a8d88" stroke-width="1"/>
<path d="M437,19.5 v6 M437,23 h8 v2.5 M438.5,21.5 h6.5 v1.5" fill="none" stroke="#6e5c57" stroke-width="1.3"/>
</g>
<text x="375" y="26.0" font-size="11" font-weight="normal" fill="#595959" text-anchor="start" stroke="#fff" stroke-width="2.5" paint-order="stroke" stroke-linejoin="round" >福州大饭店</text>
<g opacity="1.0"><circle cx="499.6" cy="21.9" r="6.8" fill="#000" opacity="0.12"/><circle cx="499" cy="21" r="6.5" fill="#fff" stroke="#8060c0" stroke-width="1"/>
<path d="M497.2,23.5 v-5.5 h4 v5" fill="none" stroke="#7b5bb8" stroke-width="1.2"/><circle cx="496.4" cy="23.8" r="1.4" fill="#7b5bb8"/><circle cx="500.4" cy="23.3" r="1.4" fill="#7b5bb8"/>
</g>
<text x="511" y="25.0" font-size="11" font-weight="normal" fill="#595959" text-anchor="start" stroke="#fff" stroke-width="2.5" paint-order="stroke" stroke-linejoin="round" >福建大剧院</text>
<text x="581" y="36.0" font-size="11" font-weight="normal" fill="#595959" text-anchor="start" stroke="#fff" stroke-width="2.5" paint-order="stroke" stroke-linejoin="round" >福州</text>
<g opacity="1.0"><circle cx="473.6" cy="57.9" r="6.8" fill="#000" opacity="0.12"/><circle cx="473" cy="57" r="6.5" fill="#fff" stroke="#9a8d88" stroke-width="1"/>
<path d="M472.1,52.8 h1.8 v1.6 h1 v2 h1.2 v2 h1.2 v2.6 h-8.4 v-2.6 h1.2 v-2 h1.2 v-2 h1 z" fill="#6e5c57"/>
</g>
<text x="485" y="60.0" font-size="11" font-weight="normal" fill="#595959" text-anchor="start" stroke="#fff" stroke-width="2.5" paint-order="stroke" stroke-linejoin="round" >金源大广场</text>
<g opacity="1.0"><circle cx="544.6" cy="78.9" r="6.8" fill="#000" opacity="0.12"/><circle cx="544" cy="78" r="6.5" fill="#fff" stroke="#9a8d88" stroke-width="1"/>
<path d="M543.1,73.8 h1.8 v1.6 h1 v2 h1.2 v2 h1.2 v2.6 h-8.4 v-2.6 h1.2 v-2 h1.2 v-2 h1 z" fill="#6e5c57"/>
</g>
<text x="556" y="82.0" font-size="11" font-weight="normal" fill="#595959" text-anchor="start" stroke="#fff" stroke-width="2.5" paint-order="stroke" stroke-linejoin="round" >平安大厦</text>
<circle cx="446" cy="93" r="6" fill="#fff"/><path d="M441.5,95 a2.6,2.6 0 0 1 1.5,-4 a3.2,3.2 0 0 1 6,0 a2.6,2.6 0 0 1 1.5,4 z M446,92 v5" fill="none" stroke="#2e9a4a" stroke-width="1.3"/>
<text x="456" y="97.7" font-size="13" font-weight="normal" fill="#3f5040" text-anchor="start" stroke="#fff" stroke-width="2.5" paint-order="stroke" stroke-linejoin="round" >茶亭</text>
<text x="490" y="108.7" font-size="13" font-weight="bold" fill="#9a6a2e" text-anchor="start" stroke="#fff" stroke-width="2.5" paint-order="stroke" stroke-linejoin="round" >茶亭</text>
<g opacity="1.0"><circle cx="475.6" cy="129.9" r="6.8" fill="#000" opacity="0.12"/><circle cx="475" cy="129" r="6.5" fill="#fff" stroke="#9a8d88" stroke-width="1"/>
<path d="M475,125 L478.5,129.5 h-1.2 l2,2 h-8.6 l2,-2 h-1.2 z" fill="#2f5a3a"/><rect x="474.4" y="131" width="1.2" height="2.5" fill="#2f5a3a"/><rect x="476.5" y="132" width="1.6" height="1.4" fill="#2f5a3a"/>
</g>
<text x="486" y="133.0" font-size="11" font-weight="normal" fill="#595959" text-anchor="start" stroke="#fff" stroke-width="2.5" paint-order="stroke" stroke-linejoin="round" >茶亭公园</text>
<text x="259" y="124.0" font-size="11" font-weight="normal" fill="#595959" text-anchor="start" stroke="#fff" stroke-width="2.5" paint-order="stroke" stroke-linejoin="round" >福州三十六中学</text>
<g opacity="1.0"><circle cx="347.6" cy="120.9" r="6.8" fill="#000" opacity="0.12"/><circle cx="347" cy="120" r="6.5" fill="#fff" stroke="#9a8d88" stroke-width="1"/>
<path d="M344,117.8 h4.5 M347,117.8 v1.6 M343.8,120.8 h6 M345.5,120.8 v2.2 M343.8,123 h2.5 M348.5,120.8 v2.2 h1.8" fill="none" stroke="#6e5c57" stroke-width="1.3"/>
</g>
<g opacity="1.0"><circle cx="248.6" cy="169.9" r="6.8" fill="#000" opacity="0.12"/><circle cx="248" cy="169" r="6.5" fill="#fff" stroke="#8060c0" stroke-width="1"/>
<rect x="244.7" y="167.5" width="6.6" height="5" rx="0.8" fill="#7b5bb8"/><path d="M246.4,167.5 v-1 a1.6,1.6 0 0 1 3.2,0 v1" fill="none" stroke="#7b5bb8" stroke-width="1"/>
</g>
<text x="193" y="173.0" font-size="11" font-weight="normal" fill="#595959" text-anchor="start" stroke="#fff" stroke-width="2.5" paint-order="stroke" stroke-linejoin="round" >天虹商场</text>
<circle cx="287" cy="184" r="3.4" fill="#fff" stroke="#5a6470" stroke-width="1.8"/>
<text x="296" y="188.7" font-size="13" font-weight="normal" fill="#5a6470" text-anchor="start" stroke="#fff" stroke-width="2.5" paint-order="stroke" stroke-linejoin="round" >宁化</text>
<rect x="251" y="196" width="29" height="16" rx="3" fill="#9a96e0"/>
<text x="254" y="208.2" font-size="13" font-weight="normal" fill="#fff" text-anchor="start"  >宝龙</text>
<g opacity="1.0"><circle cx="299.6" cy="203.9" r="6.8" fill="#000" opacity="0.12"/><circle cx="299" cy="203" r="6.5" fill="#fff" stroke="#8060c0" stroke-width="1"/>
<rect x="295.7" y="201.5" width="6.6" height="5" rx="0.8" fill="#7b5bb8"/><path d="M297.4,201.5 v-1 a1.6,1.6 0 0 1 3.2,0 v1" fill="none" stroke="#7b5bb8" stroke-width="1"/>
</g>
<text x="311" y="208.0" font-size="11" font-weight="normal" fill="#595959" text-anchor="start" stroke="#fff" stroke-width="2.5" paint-order="stroke" stroke-linejoin="round" >红星美凯龙</text>
<g opacity="1.0"><circle cx="259.6" cy="240.9" r="6.8" fill="#000" opacity="0.12"/><circle cx="259" cy="240" r="6.5" fill="#fff" stroke="#9a8d88" stroke-width="1"/>
<path d="M256,237.8 h4.5 M259,237.8 v1.6 M255.8,240.8 h6 M257.5,240.8 v2.2 M255.8,243 h2.5 M260.5,240.8 v2.2 h1.8" fill="none" stroke="#6e5c57" stroke-width="1.3"/>
</g>
<text x="272" y="245.0" font-size="11" font-weight="normal" fill="#595959" text-anchor="start" stroke="#fff" stroke-width="2.5" paint-order="stroke" stroke-linejoin="round" >福州市宁化小学</text>
<g opacity="1.0"><circle cx="492.6" cy="169.9" r="6.8" fill="#000" opacity="0.12"/><circle cx="492" cy="169" r="6.5" fill="#fff" stroke="#9a8d88" stroke-width="1"/>
<path d="M492,165 L495.5,169.5 h-1.2 l2,2 h-8.6 l2,-2 h-1.2 z" fill="#2f5a3a"/><rect x="491.4" y="171" width="1.2" height="2.5" fill="#2f5a3a"/><rect x="493.5" y="172" width="1.6" height="1.4" fill="#2f5a3a"/>
</g>
<text x="437" y="173.0" font-size="11" font-weight="normal" fill="#4a7a50" text-anchor="start" stroke="#fff" stroke-width="2.5" paint-order="stroke" stroke-linejoin="round" >青年广场</text>
<g opacity="1.0"><circle cx="543.6" cy="167.9" r="6.8" fill="#000" opacity="0.12"/><circle cx="543" cy="167" r="6.5" fill="#fff" stroke="#9a8d88" stroke-width="1"/>
<rect x="539.5" y="163.5" width="7" height="6.5" rx="1.2" fill="none" stroke="#6e5c57" stroke-width="1.3"/><path d="M539.5,167.5 h7" stroke="#6e5c57" stroke-width="1"/>
</g>
<text x="555" y="170.0" font-size="11" font-weight="normal" fill="#595959" text-anchor="start" stroke="#fff" stroke-width="2.5" paint-order="stroke" stroke-linejoin="round" >福州汽车站</text>
<g opacity="1.0"><circle cx="41.6" cy="226.9" r="6.8" fill="#000" opacity="0.12"/><circle cx="41" cy="226" r="6.5" fill="#fff" stroke="#9a8d88" stroke-width="1"/>
<path d="M41,222 L44.5,226.5 h-1.2 l2,2 h-8.6 l2,-2 h-1.2 z" fill="#2f5a3a"/><rect x="40.4" y="228" width="1.2" height="2.5" fill="#2f5a3a"/><rect x="42.5" y="229" width="1.6" height="1.4" fill="#2f5a3a"/>
</g>
<text x="0" y="230.0" font-size="11" font-weight="normal" fill="#4a7a50" text-anchor="start" stroke="#fff" stroke-width="2.5" paint-order="stroke" stroke-linejoin="round" >金沙园</text>
<g opacity="1.0"><circle cx="76.6" cy="235.9" r="6.8" fill="#000" opacity="0.12"/><circle cx="76" cy="235" r="6.5" fill="#fff" stroke="#9a8d88" stroke-width="1"/>
<path d="M75.1,230.8 h1.8 v1.6 h1 v2 h1.2 v2 h1.2 v2.6 h-8.4 v-2.6 h1.2 v-2 h1.2 v-2 h1 z" fill="#6e5c57"/>
</g>
<text x="87" y="238.0" font-size="11" font-weight="normal" fill="#595959" text-anchor="start" stroke="#fff" stroke-width="2.5" paint-order="stroke" stroke-linejoin="round" >融侨中心</text>
<text x="-7" y="256.7" font-size="13" font-weight="normal" fill="#a0702e" text-anchor="start" stroke="#fff" stroke-width="2.5" paint-order="stroke" stroke-linejoin="round" >大桥</text>
<g opacity="1.0"><circle cx="528.6" cy="228.9" r="6.8" fill="#000" opacity="0.12"/><circle cx="528" cy="228" r="6.5" fill="#fff" stroke="#9a8d88" stroke-width="1"/>
<path d="M525,225.8 h4.5 M528,225.8 v1.6 M524.8,228.8 h6 M526.5,228.8 v2.2 M524.8,231 h2.5 M529.5,228.8 v2.2 h1.8" fill="none" stroke="#6e5c57" stroke-width="1.3"/>
</g>
<text x="474" y="231.0" font-size="11" font-weight="normal" fill="#595959" text-anchor="start" stroke="#fff" stroke-width="2.5" paint-order="stroke" stroke-linejoin="round" >华伦中学</text>
<g opacity="1.0"><circle cx="561.6" cy="236.9" r="6.8" fill="#000" opacity="0.12"/><circle cx="561" cy="236" r="6.5" fill="#fff" stroke="#9a8d88" stroke-width="1"/>
<path d="M557.5,236 h7 M561,232.5 v7" stroke="#e0282e" stroke-width="2.2"/>
<circle cx="561" cy="236" r="6.5" fill="none" stroke="#e0282e" stroke-width="0.9"/>
</g>
<text x="573" y="240.0" font-size="11" font-weight="normal" fill="#595959" text-anchor="start" stroke="#fff" stroke-width="2.5" paint-order="stroke" stroke-linejoin="round" >福州市</text>
<g opacity="1.0"><circle cx="498.6" cy="286.9" r="6.8" fill="#000" opacity="0.12"/><circle cx="498" cy="286" r="6.5" fill="#fff" stroke="#9a8d88" stroke-width="1"/>
<path d="M495,289.5 v-4.5 l1.2,0 v-2 h1.8 v2 h1 v4.5" fill="none" stroke="#6e5c57" stroke-width="1.2"/>
</g>
<text x="443" y="290.0" font-size="11" font-weight="normal" fill="#595959" text-anchor="start" stroke="#fff" stroke-width="2.5" paint-order="stroke" stroke-linejoin="round" >群升国际</text>
<circle cx="519" cy="279" r="6" fill="#fff"/><path d="M514.5,281 a2.6,2.6 0 0 1 1.5,-4 a3.2,3.2 0 0 1 6,0 a2.6,2.6 0 0 1 1.5,4 z M519,278 v5" fill="none" stroke="#2e9a4a" stroke-width="1.3"/>
<text x="529" y="284.7" font-size="13" font-weight="normal" fill="#333" text-anchor="start" stroke="#fff" stroke-width="2.5" paint-order="stroke" stroke-linejoin="round" >达道</text>
<text x="587" y="293.0" font-size="11" font-weight="normal" fill="#595959" text-anchor="start" stroke="#fff" stroke-width="2.5" paint-order="stroke" stroke-linejoin="round" >古</text>
<rect x="499" y="306" width="29" height="17" rx="3" fill="#7b7bd5"/>
<text x="502" y="319.2" font-size="13" font-weight="normal" fill="#fff" text-anchor="start"  >后洲</text>
<rect x="496" y="327" width="41" height="17" rx="3" fill="#7b7bd5"/>
<text x="498" y="340.2" font-size="13" font-weight="normal" fill="#fff" text-anchor="start"  >中亭街</text>
<g opacity="1.0"><circle cx="391.6" cy="359.9" r="6.8" fill="#000" opacity="0.12"/><circle cx="391" cy="359" r="6.5" fill="#fff" stroke="#9a8d88" stroke-width="1"/>
<path d="M388,356.8 h4.5 M391,356.8 v1.6 M387.8,359.8 h6 M389.5,359.8 v2.2 M387.8,362 h2.5 M392.5,359.8 v2.2 h1.8" fill="none" stroke="#6e5c57" stroke-width="1.3"/>
</g>
<text x="404" y="363.0" font-size="11" font-weight="normal" fill="#595959" text-anchor="start" stroke="#fff" stroke-width="2.5" paint-order="stroke" stroke-linejoin="round" >福州第四中学</text>
<g opacity="1.0"><circle cx="315.6" cy="281.9" r="6.8" fill="#000" opacity="0.12"/><circle cx="315" cy="281" r="6.5" fill="#fff" stroke="#9a8d88" stroke-width="1"/>
<path d="M312,278.8 h4.5 M315,278.8 v1.6 M311.8,281.8 h6 M313.5,281.8 v2.2 M311.8,284 h2.5 M316.5,281.8 v2.2 h1.8" fill="none" stroke="#6e5c57" stroke-width="1.3"/>
</g>
<text x="327" y="285.0" font-size="11" font-weight="normal" fill="#595959" text-anchor="start" stroke="#fff" stroke-width="2.5" paint-order="stroke" stroke-linejoin="round" >福州华侨中学</text>
<g opacity="1.0"><circle cx="112.6" cy="284.9" r="6.8" fill="#000" opacity="0.12"/><circle cx="112" cy="284" r="6.5" fill="#fff" stroke="#9a8d88" stroke-width="1"/>
<path d="M112,280 L115.5,284.5 h-1.2 l2,2 h-8.6 l2,-2 h-1.2 z" fill="#2f5a3a"/><rect x="111.4" y="286" width="1.2" height="2.5" fill="#2f5a3a"/><rect x="113.5" y="287" width="1.6" height="1.4" fill="#2f5a3a"/>
</g>
<text x="123" y="288.0" font-size="11" font-weight="normal" fill="#4a7a50" text-anchor="start" stroke="#fff" stroke-width="2.5" paint-order="stroke" stroke-linejoin="round" >望龙园</text>
<circle cx="163" cy="287" r="3.4" fill="#fff" stroke="#666" stroke-width="1.8"/>
<text x="170" y="291.7" font-size="13" font-weight="normal" fill="#444" text-anchor="start" stroke="#fff" stroke-width="2.5" paint-order="stroke" stroke-linejoin="round" >祥坂</text>
<g opacity="1.0"><circle cx="185.6" cy="316.9" r="6.8" fill="#000" opacity="0.12"/><circle cx="185" cy="316" r="6.5" fill="#fff" stroke="#9a8d88" stroke-width="1"/>
<path d="M185,312 L188.5,316.5 h-1.2 l2,2 h-8.6 l2,-2 h-1.2 z" fill="#2f5a3a"/><rect x="184.4" y="318" width="1.2" height="2.5" fill="#2f5a3a"/><rect x="186.5" y="319" width="1.6" height="1.4" fill="#2f5a3a"/>
</g>
<text x="196" y="320.0" font-size="11" font-weight="normal" fill="#4a7a50" text-anchor="start" stroke="#fff" stroke-width="2.5" paint-order="stroke" stroke-linejoin="round" >缤纷园</text>
<g opacity="1.0"><circle cx="294.6" cy="272.9" r="6.8" fill="#000" opacity="0.12"/><circle cx="294" cy="272" r="6.5" fill="#fff" stroke="#9a8d88" stroke-width="1"/>
<path d="M293.1,267.8 h1.8 v1.6 h1 v2 h1.2 v2 h1.2 v2.6 h-8.4 v-2.6 h1.2 v-2 h1.2 v-2 h1 z" fill="#6e5c57"/>
</g>
<text x="205" y="276.0" font-size="11" font-weight="normal" fill="#595959" text-anchor="start" stroke="#fff" stroke-width="2.5" paint-order="stroke" stroke-linejoin="round" >小七散打俱乐部</text>
<g opacity="1.0"><circle cx="316.6" cy="353.9" r="6.8" fill="#000" opacity="0.12"/><circle cx="316" cy="353" r="6.5" fill="#fff" stroke="#9a8d88" stroke-width="1"/>
<path d="M313,356.5 v-4.5 l1.2,0 v-2 h1.8 v2 h1 v4.5" fill="none" stroke="#6e5c57" stroke-width="1.2"/>
</g>
<text x="226" y="357.0" font-size="11" font-weight="normal" fill="#595959" text-anchor="start" stroke="#fff" stroke-width="2.5" paint-order="stroke" stroke-linejoin="round" >义洲新区长寿园</text>
<text x="532" y="403.0" font-size="11" font-weight="normal" fill="#595959" text-anchor="start" stroke="#fff" stroke-width="2.5" paint-order="stroke" stroke-linejoin="round" >解放大桥</text>
<text x="579" y="362" font-size="10" fill="#e0282e" stroke="#fff" stroke-width="2" paint-order="stroke" transform="rotate(56 579 362)">福马铁路</text>
<text x="25" y="384.0" font-size="11" font-weight="normal" fill="#6b5a40" text-anchor="start" stroke="#fff" stroke-width="2.5" paint-order="stroke" stroke-linejoin="round" >道草别野</text>
<text x="110" y="386.0" font-size="11" font-weight="normal" fill="#595959" text-anchor="start" stroke="#fff" stroke-width="2.5" paint-order="stroke" stroke-linejoin="round" >融侨外滩</text>
<polygon points="188,149 266,119 338,129 354,253 194,257" fill="#ffffff" fill-opacity="0.55" stroke="#6a6af2" stroke-opacity="0.95" stroke-width="2"/>
<rect x="183.5" y="144.5" width="10" height="10" fill="#fff" stroke="#000" stroke-width="1"/>
<rect x="222.5" y="129.5" width="10" height="10" fill="#fff" stroke="#000" stroke-width="1"/>
<rect x="261.5" y="114.5" width="10" height="10" fill="#fff" stroke="#000" stroke-width="1"/>
<rect x="297.5" y="119.5" width="10" height="10" fill="#fff" stroke="#000" stroke-width="1"/>
<rect x="333.5" y="124.5" width="10" height="10" fill="#fff" stroke="#000" stroke-width="1"/>
<rect x="341.5" y="186.5" width="10" height="10" fill="#fff" stroke="#000" stroke-width="1"/>
<rect x="349.5" y="248.5" width="10" height="10" fill="#fff" stroke="#000" stroke-width="1"/>
<rect x="269.5" y="250.5" width="10" height="10" fill="#fff" stroke="#000" stroke-width="1"/>
<rect x="189.5" y="252.5" width="10" height="10" fill="#fff" stroke="#000" stroke-width="1"/>
<rect x="186.5" y="198.5" width="10" height="10" fill="#fff" stroke="#000" stroke-width="1"/>
<ellipse cx="273" cy="194" rx="7" ry="3" fill="#000" opacity="0.25" transform="rotate(-20 273 194)"/>
<path d="M266,197 C262,189 257,186 257,181 A9,9 0 0 1 275,181 C275,186 270,189 266,197 Z" fill="#e8262c"/>
<g><rect x="3" y="361" width="73" height="16" rx="3" fill="#fff"/><ellipse cx="39.5" cy="363" rx="11" ry="10" fill="#fff"/>
<text x="5" y="375" font-size="15" font-weight="bold" fill="#e1161d">Bai</text>
<ellipse cx="36.6" cy="356.4" rx="2.7" ry="3.5" fill="#2020d8"/><ellipse cx="43.5" cy="357" rx="2.7" ry="3.5" fill="#2020d8"/><ellipse cx="31.8" cy="361.2" rx="2.6" ry="3.4" fill="#2020d8" transform="rotate(-20 31.8 361.2)"/><ellipse cx="47.4" cy="362.8" rx="2.6" ry="3.4" fill="#2020d8" transform="rotate(20 47.4 362.8)"/>
<path d="M33,375 C29,375 29,370 33,367 C36,364 37,362 39.5,362 C42,362 43,364 46,367 C50,370 50,375 46,375 Z" fill="#2020d8"/>
<text x="34.5" y="373.5" font-size="8" font-weight="bold" fill="#fff">du</text>
<text x="51" y="375" font-size="12" font-weight="bold" fill="#e1161d">地图</text></g>
<rect x="0" y="383" width="346" height="14" fill="#fff" fill-opacity="0.6"/>
<text x="3" y="394" font-size="12" fill="#333">© 2017 Baidu - GS(2016)2089号 - Data © 长地万方 &amp; <tspan fill="#6a6ae0">PalmCity</tspan></text>
</svg></div><div class="inp" style="top:733px"><b class="lt">18612345678</b></div><div class="inp" style="top:771px">何</div><div class="inp" style="top:809px"><b class="lt">8</b>：<b class="lt">00 - 20</b>：<b class="lt">00</b></div><div class="btn" style="left:364px;top:847px">保存</div><div class="btn" style="left:431px;top:847px;width:64px">重置</div><div id="ftr">方维商业系统 fanwe.com 管理平台 系统版本:6.5.12068</div></body></html>
